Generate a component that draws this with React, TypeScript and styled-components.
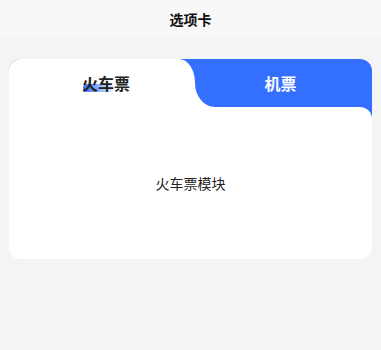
import styled, { createGlobalStyle } from "styled-components";

const Global = createGlobalStyle`
  html, body {
    margin: 0;
    padding: 0;
    background: #f4f4f4;
    font-family: "Noto Sans CJK SC", "Noto Sans", sans-serif;
  }
`;

const BLUE = "#3470ff";

export default function App() {
  return (
    <>
      <Global />
      <Page>
        <NavBar>选项卡</NavBar>
        <Card>
          <Tabs>
            <ActiveTab>
              <Label>
                <Indicator />
                <LabelText>火车票</LabelText>
              </Label>
            </ActiveTab>
            <Tab>机票</Tab>
          </Tabs>
          <Panel>火车票模块</Panel>
        </Card>
      </Page>
    </>
  );
}

const Page = styled.div`
  min-height: 350px;
  background: #f4f4f4;
`;

const NavBar = styled.div`
  height: 38px;
  background: #f8f8f8;
  display: flex;
  align-items: center;
  justify-content: center;
  font-size: 14px;
  font-weight: 700;
  color: #111;
`;

// blue only behind the tab strip and the panel's top-right corner
const Card = styled.div`
  margin: 21px 9px 0;
  border-radius: 12px;
  overflow: hidden;
  background: linear-gradient(${BLUE} 0 64px, #fff 64px);
`;

const Tabs = styled.div`
  display: flex;
  height: 48px;
`;

const ActiveTab = styled.div`
  width: 178px;
  padding-left: 8px;
  background: #fff;
  border-top-right-radius: 16px 24px;
  display: flex;
  align-items: center;
  justify-content: center;
`;

const Label = styled.div`
  position: relative;
  font-size: 16px;
  font-weight: 700;
  color: #222;
`;

const Indicator = styled.span`
  position: absolute;
  left: 1px;
  bottom: 3px;
  width: 30px;
  height: 8px;
  border-radius: 4px;
  background: linear-gradient(90deg, ${BLUE}, rgba(52, 112, 255, 0.15));
`;

const LabelText = styled.span`
  position: relative;
`;

const Tab = styled.div`
  flex: 1;
  position: relative;
  display: flex;
  align-items: center;
  justify-content: center;
  padding-right: 6px;
  font-size: 16px;
  font-weight: 700;
  color: #fff;

  &::before,
  &::after {
    content: "";
    position: absolute;
    left: 0;
    bottom: 0;
    width: 20px;
    height: 24px;
  }
  &::before {
    background: #fff;
  }
  &::after {
    background: ${BLUE};
    border-bottom-left-radius: 20px 24px;
  }
`;

const Panel = styled.div`
  height: 152px;
  background: #fff;
  border-top-right-radius: 12px;
  display: flex;
  align-items: center;
  justify-content: center;
  font-size: 14px;
  color: #222;
`;
